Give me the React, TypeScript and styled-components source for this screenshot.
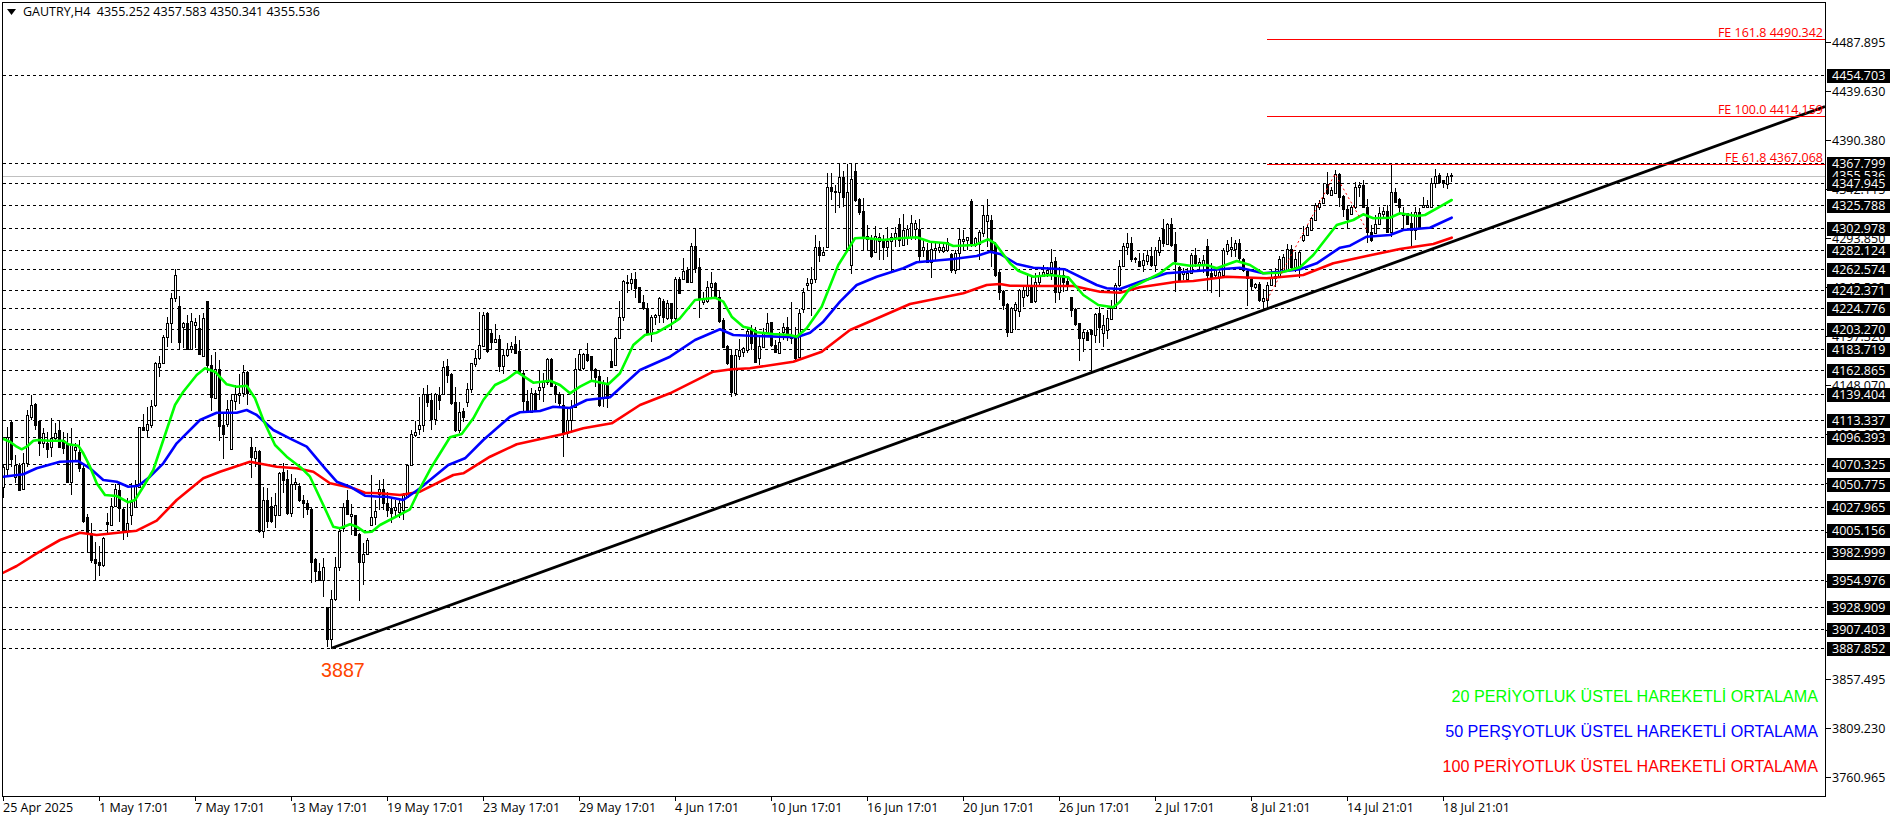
import React from "react";
import styled, { createGlobalStyle } from "styled-components";

type Pt = [number, number];
type Bar = [number, number, number, number, number];

const GlobalStyle = createGlobalStyle`
  html, body { margin: 0; padding: 0; background: #ffffff; }
  body { font-family: "Open Sans", "DejaVu Sans", sans-serif; }
`;

const Page = styled.div`
  width: 1896px;
  height: 820px;
  padding: 2px 0 0 2px;
  box-sizing: border-box;
  background: #fff;
  overflow: hidden;
  font-family: "Open Sans", "DejaVu Sans", sans-serif;
  font-size: 12.5px;
  color: #000;
`;

const ChartRow = styled.div`
  display: flex;
  height: 795px;
`;

const Plot = styled.div`
  position: relative;
  width: 1824px;
  height: 795px;
  box-sizing: border-box;
  border: 1px solid #000;
  flex: none;
`;

const ChartSvg = styled.svg`
  display: block;
  width: 1822px;
  height: 793px;
`;

const PriceAxis = styled.div`
  position: relative;
  flex: 1;
`;

const TimeAxis = styled.div`
  display: flex;
  height: 23px;
  padding-left: 1px;
`;

const TimeCell = styled.div`
  flex: none;
  width: 96px;
  height: 23px;
  box-sizing: border-box;
  padding-top: 3px;
  line-height: 16px;
  white-space: nowrap;
  background: linear-gradient(#000, #000) no-repeat 0 0 / 1px 4px;
`;

const TitleBar = styled.div`
  position: absolute;
  left: 4px;
  top: 0;
  display: flex;
  align-items: center;
  gap: 7px;
  height: 17px;
  white-space: pre;
  line-height: 17px;
`;

const Triangle = styled.svg`
  display: block;
  width: 9px;
  height: 6px;
`;

const FeLabel = styled.div`
  position: absolute;
  right: 2px;
  height: 16px;
  line-height: 16px;
  color: #ff0000;
  white-space: nowrap;
`;

const Legend = styled.div`
  position: absolute;
  right: 7px;
  top: 683px;
  display: flex;
  flex-direction: column;
  align-items: flex-end;
  gap: 15px;
`;

const LegendLabel = styled.div<{ $color: string }>`
  height: 20px;
  line-height: 20px;
  font-family: "Liberation Sans", Arial, sans-serif;
  font-size: 16.15px;
  color: ${(p) => p.$color};
  white-space: nowrap;
`;

const LowLabel = styled.div`
  position: absolute;
  left: 318px;
  top: 654px;
  height: 26px;
  line-height: 26px;
  font-family: "Liberation Sans", Arial, sans-serif;
  font-size: 19.7px;
  color: #ff4500;
`;

const AxisTick = styled.div`
  position: absolute;
  left: 0;
  width: 5px;
  height: 1px;
  background: #000;
`;

const AxisPrice = styled.div`
  position: absolute;
  left: 6px;
  height: 14px;
  line-height: 14px;
  white-space: nowrap;
`;

const LevelBox = styled.div`
  position: absolute;
  left: 1px;
  width: 58px;
  height: 14px;
  padding-left: 5px;
  line-height: 14px;
  background: #000;
  color: #fff;
  white-space: nowrap;
`;

const GridLine = styled.line`
  stroke: #000;
  stroke-width: 1;
  stroke-dasharray: 3 3;
  shape-rendering: crispEdges;
`;

const BidLine = styled.line`
  stroke: #c0c0c0;
  stroke-width: 1;
  shape-rendering: crispEdges;
`;

const FeLine = styled.line`
  stroke: #ff0000;
  stroke-width: 1;
  shape-rendering: crispEdges;
`;

const FeBase = styled.polyline`
  fill: none;
  stroke: #ff0000;
  stroke-width: 1;
  stroke-dasharray: 2 3;
`;

const Wick = styled.line`
  stroke: #000;
  stroke-width: 1;
  shape-rendering: crispEdges;
`;

const Body = styled.rect<{ $bear: boolean }>`
  fill: ${(p) => (p.$bear ? "#000" : "#fff")};
  stroke: #000;
  stroke-width: 1;
  shape-rendering: crispEdges;
`;

const MaLine = styled.polyline<{ $color: string }>`
  fill: none;
  stroke: ${(p) => p.$color};
  stroke-width: 2.6;
  stroke-linejoin: round;
  stroke-linecap: round;
`;

const TrendLine = styled.line`
  stroke: #000;
  stroke-width: 2.8;
`;

const priceY = (p: number) => 75 + (4454.703 - p) * 1.01137;

const LEVELS = [
  "4454.703", "4367.799", "4347.945", "4325.788", "4302.978", "4282.124", "4262.574", "4242.371",
  "4224.776", "4203.270", "4183.719", "4162.865", "4139.404", "4113.337", "4096.393", "4070.325",
  "4050.775", "4027.965", "4005.156", "3982.999", "3954.976", "3928.909", "3907.403", "3887.852",
];

const TICKS: [string, number][] = [
  ["4487.895", 42], ["4439.630", 91], ["4390.380", 140], ["4342.115", 189], ["4293.850", 238],
  ["4245.585", 287], ["4197.320", 336], ["4148.070", 385], ["4099.805", 434], ["4051.540", 483],
  ["4003.275", 532], ["3955.010", 581], ["3906.745", 630], ["3857.495", 679], ["3809.230", 728], ["3760.965", 777],
];

const DATES = [
  "25 Apr 2025", "1 May 17:01", "7 May 17:01", "13 May 17:01", "19 May 17:01", "23 May 17:01",
  "29 May 17:01", "4 Jun 17:01", "10 Jun 17:01", "16 Jun 17:01", "20 Jun 17:01", "26 Jun 17:01",
  "2 Jul 17:01", "8 Jul 21:01", "14 Jul 21:01", "18 Jul 21:01",
];

const FE_LINES: [string, number, number][] = [
  ["FE 161.8 4490.342", 39.5, 32],
  ["FE 100.0 4414.159", 116.5, 109],
  ["FE 61.8 4367.068", 164.5, 157],
];

const LEGEND: [string, string][] = [
  ["20 PERİYOTLUK ÜSTEL HAREKETLİ ORTALAMA", "#00ff00"],
  ["50 PERŞYOTLUK ÜSTEL HAREKETLİ ORTALAMA", "#0000ff"],
  ["100 PERİYOTLUK ÜSTEL HAREKETLİ ORTALAMA", "#ff0000"],
];

const BARS_A: Bar[] = [
  [645,650,712,745,0],[530,560,658,680,0],[510,515,627,650,1],[615,645,680,700,0],[640,645,720,722,1],[610,638,718,720,0],
  [480,495,640,650,0],[435,465,500,510,0],[460,462,525,540,1],[510,512,578,618,1],[535,548,578,595,0],[545,578,598,625,1],
  [505,565,592,622,0],[520,550,565,575,0],[510,540,592,595,1],[545,570,595,612,1],[548,580,695,700,1],[535,585,695,735,0],
  [580,590,600,630,0],[570,605,655,665,1],[640,655,812,818,1],[792,800,845,905,1],[818,848,930,938,1],[875,928,938,990,1],
  [888,936,944,978,1],[862,865,945,950,0],[790,815,823,855,1],[745,768,825,825,0],[702,716,767,770,0],[705,720,775,815,1],
  [775,778,842,870,1],[745,820,842,860,0],[700,755,795,825,0],[690,705,770,775,0],[530,530,710,710,0],[492,530,540,540,1],
  [470,522,540,562,0],[450,468,525,535,0],[335,340,465,470,0],[318,338,352,382,0],[255,262,338,342,0],[200,220,262,290,0],
  [130,145,220,278,0],[58,75,145,155,0],[138,168,275,300,1],[215,220,230,295,0],[195,220,298,298,1],[190,212,296,298,0],
  [205,215,225,295,0],[195,235,312,315,1],[190,205,318,322,0],[153,153,345,368,1],[315,345,442,482,1],[305,358,444,448,0],
  [330,358,527,572,1],[490,525,553,628,1],[450,478,522,530,0],[432,450,598,598,0],[405,432,452,480,0],[372,428,436,462,0],
  [345,366,430,440,0],[362,366,430,465,1],[565,592,622,685,1],[590,603,625,650,0],[600,603,842,850,1],[710,750,842,865,0],
  [715,750,812,835,1],[740,768,812,820,1],[730,765,795,835,0],[665,670,795,795,0],[640,665,690,730,1],[660,688,790,795,1],
  [672,702,788,800,0],[685,695,702,720,0],[700,708,750,755,1],[735,750,760,805,1],[750,760,778,795,1],[775,778,935,998,1],
  [925,928,962,995,1],[940,962,990,990,1],[925,952,990,1040,0],[1072,1072,1168,1190,1],[1020,1048,1168,1196,0],[922,952,1048,1052,0],
  [835,842,952,962,0],[760,770,835,845,0],[720,750,792,795,1],[762,792,797,855,0],[795,796,855,855,1],[850,852,935,1052,1],
  [880,912,935,1005,0],[865,870,912,915,0],[675,802,825,825,0],[750,782,802,825,0],
];

const BARS_B: Bar[] = [
  [810,838,852,900,0],[808,838,880,900,1],[845,880,900,920,1],[860,895,910,940,1],[870,890,900,920,0],[870,880,905,925,0],
  [850,855,900,930,0],[762,765,860,860,0],[660,672,765,768,0],[632,666,675,680,0],[560,645,656,675,0],[535,552,645,665,0],
  [525,552,575,590,1],[550,570,628,660,1],[550,553,628,645,0],[530,555,570,600,1],[452,472,553,555,0],[448,468,494,520,1],
  [490,492,578,585,1],[530,575,660,665,1],[575,605,660,670,0],[595,603,622,635,1],[520,538,575,590,0],[458,460,538,550,0],
  [420,445,462,470,0],[305,406,445,450,0],[305,316,408,410,0],[305,310,422,428,1],[360,368,395,420,1],[343,388,396,400,0],
  [375,388,468,485,1],[420,435,468,492,0],[400,418,436,440,0],[395,408,418,430,0],[378,403,428,430,1],[390,422,485,490,1],
  [480,488,572,605,1],[540,572,606,608,1],[535,548,606,608,0],[540,548,602,605,1],[480,530,540,570,0],[490,515,530,575,0],
  [445,448,515,525,0],[445,447,528,530,1],[515,528,552,580,1],[545,552,580,590,1],[555,585,670,740,1],[595,630,670,685,0],
  [570,590,630,670,0],[445,478,590,592,0],[420,432,478,480,0],[428,432,475,480,0],[400,432,450,455,1],[438,438,480,510,1],
  [475,478,500,530,1],[480,498,585,590,1],[510,520,565,590,0],[500,520,565,595,1],[418,453,470,475,1],[380,385,465,468,0],
  [272,320,385,388,0],[210,213,320,333,0],[195,215,220,250,0],[188,208,220,240,0],[185,208,234,265,1],[230,232,275,277,1],
  [255,275,295,300,1],[280,295,370,375,1],[315,322,372,395,0],[312,316,322,345,0],[262,263,316,340,0],[268,272,320,338,1],
  [270,280,325,330,0],[278,280,325,358,1],[200,208,325,340,0],[200,208,248,250,1],[145,183,208,210,0],[172,180,216,218,1],
  [100,108,215,218,0],[55,108,173,188,1],[145,172,268,325,1],[245,268,275,285,0],[212,232,272,278,0],[185,220,232,265,0],
  [215,220,262,265,1],[240,262,332,340,1],[325,330,410,412,1],[405,408,458,465,1],[420,435,545,560,1],[420,435,550,558,0],
  [388,420,438,450,0],[410,415,425,440,0],[355,362,420,428,0],
];

const BARS_C: Bar[] = [
  [525,540,580,600,1],[530,540,635,637,1],[560,588,625,645,0],[535,545,590,592,0],[488,518,545,550,0],[515,517,585,590,1],
  [570,585,605,610,1],[545,575,608,612,0],[520,530,545,570,0],[500,530,555,572,1],[455,555,565,582,0],[530,560,625,632,1],
  [478,488,622,625,0],[415,427,478,488,0],[385,398,406,422,0],[350,388,398,498,0],[255,292,388,400,0],[272,292,315,335,1],
  [290,306,315,318,0],[70,112,292,295,0],[70,112,122,150,1],[105,122,124,190,1],[40,80,125,175,0],[62,80,140,170,1],
  [42,125,300,305,0],[42,88,345,372,0],[40,62,150,155,1],[145,148,186,195,1],[145,183,262,300,1],[225,258,268,300,0],
  [255,268,318,325,1],[228,258,305,310,0],[250,262,272,330,0],[255,268,290,330,1],[230,272,290,320,0],[250,260,272,362,0],
  [232,248,262,290,0],[205,222,270,290,1],[192,240,285,288,0],[225,238,265,285,0],[195,218,262,270,0],[210,218,238,270,0],
  [208,238,318,335,1],[270,290,300,320,0],[280,300,335,340,1],[280,298,335,383,0],[275,295,300,330,0],[275,292,300,310,0],
  [280,290,302,310,0],[265,275,300,305,0],[310,312,360,370,1],[300,310,360,372,0],[238,268,310,360,0],[240,268,272,300,0],
  [260,262,270,300,0],[148,152,285,290,1],[260,265,285,290,0],[240,245,283,330,0],[168,195,248,260,0],[148,195,212,290,0],
  [195,210,305,350,1],[275,282,375,380,1],[360,365,425,450,1],[420,422,465,480,1],[460,462,545,560,1],[470,475,545,548,0],
  [455,463,480,540,0],[418,420,482,500,0],[408,420,440,470,0],[375,405,435,440,0],[375,405,455,458,1],[368,395,452,458,0],
  [365,378,395,410,0],[345,365,378,380,0],[350,360,370,380,0],[298,335,370,390,0],[320,333,425,458,1],[350,375,425,450,0],
  [360,375,395,425,1],[385,392,405,420,1],[440,442,480,500,1],[475,478,522,528,1],[518,520,565,632,1],[540,545,563,605,0],
  [540,545,570,570,1],[540,540,552,665,1],[490,492,555,580,0],[470,490,530,580,1],[495,525,548,590,0],[480,505,540,568,0],
  [450,475,508,510,0],[400,405,475,478,0],[330,348,405,410,0],
];

const BARS_D: Bar[] = [
  [280,288,348,350,0],[248,278,290,315,0],[262,280,328,335,1],[322,325,327,340,0],[310,333,347,350,1],[308,330,345,365,0],
  [300,316,332,345,0],[290,318,345,350,1],[292,300,345,365,0],[262,270,305,318,0],[208,238,280,290,1],[218,222,282,285,0],
  [205,222,285,290,1],[245,282,332,425,1],[348,350,390,392,1],[355,365,372,390,0],[355,368,388,390,0],[310,315,370,372,0],
  [295,315,340,350,1],[325,335,345,360,0],[315,330,345,370,0],[268,288,375,422,1],[340,370,382,428,1],[350,360,375,385,0],
  [355,365,380,440,0],[295,300,375,380,0],[270,283,302,315,0],[260,290,298,320,0],[270,278,298,320,0],[268,280,325,340,1],
  [325,328,360,365,1],[360,362,385,468,1],[380,388,408,420,1],[400,402,410,418,0],[395,402,450,455,1],[418,445,452,478,0],
  [395,405,450,475,0],[360,385,405,408,0],[355,378,385,410,0],[318,328,380,385,0],[312,320,362,365,0],[282,298,360,365,0],
  [285,298,352,358,1],[305,328,350,365,0],[300,305,355,385,0],[228,255,270,275,0],[225,232,255,258,0],[200,205,240,242,0],
  [160,165,210,212,0],[150,160,170,180,0],[100,145,160,160,0],[65,102,130,135,1],[110,120,135,138,0],[60,72,128,130,0],
  [70,72,140,170,1],[135,138,178,200,1],[165,178,208,238,1],[165,170,192,195,0],[95,112,172,178,0],[95,105,112,140,0],
  [90,105,170,175,1],[148,170,245,278,1],[225,245,270,275,1],[195,222,248,250,0],[170,188,222,225,0],[170,183,192,200,0],
  [165,182,245,250,1],[38,125,245,262,0],[115,125,155,160,1],[145,148,170,195,1],[170,190,195,235,0],[188,190,222,225,1],
  [185,220,240,290,1],[170,185,240,270,0],[175,185,230,235,1],[140,165,172,175,0],[150,165,172,175,0],[85,98,172,175,0],
  [58,78,98,115,0],[70,75,95,100,1],[90,90,100,115,1],[68,78,102,118,0],[70,75,78,95,0],
];

const GREEN_Z: [number, number, Pt[]][] = [
  [0, 250, [[10,567],[30,575],[50,590],[65,598],[80,590],[100,572],[115,570],[150,572],[190,572],[205,583],[235,587],[250,610],[270,650],[290,700],[315,735],[350,738],[385,757],[405,750],[430,710],[460,660],[490,570],[525,465],[550,425],[590,375],[615,355],[645,365],[680,403],[710,410],[740,407],[765,445],[790,510],[825,585],[860,620],[905,655],[930,680],[970,765],[1000,830],[1020,835],[1050,823],[1070,830],[1095,847],[1115,845],[1140,825]]],
  [370, 210, [[120,898],[150,835],[185,770],[240,682],[275,672],[310,625],[340,570],[375,525],[410,508],[440,485],[490,518],[540,512],[570,525],[600,550],[630,530],[665,512],[715,523],[750,490],[790,405],[825,375],[860,368],[900,345],[930,325],[975,270],[1035,263],[1060,275],[1085,320],[1120,350],[1140,355]]],
  [740, 150, [[50,547],[100,552],[150,555],[170,560],[200,535],[245,470],[295,345],[345,265],[370,263],[430,270],[480,265],[530,262],[570,275],[620,280],[640,288],[705,285],[745,268],[765,280],[810,340],[835,362],[880,380],[930,375],[985,382],[1030,435],[1075,465],[1120,472],[1140,455]]],
  [1100, 150, [[90,415],[150,385],[180,370],[220,340],[270,347],[320,345],[350,355],[410,333],[450,345],[490,370],[540,368],[600,352],[640,315],[710,225],[760,210],[790,193],[820,205],[870,203],[900,190],[950,198],[975,195],[1020,170],[1055,150]]],
];

const BLUE_Z: [number, number, Pt[]][] = [
  [0, 250, [[10,680],[70,673],[110,655],[180,635],[235,633],[270,655],[310,690],[350,695],[385,710],[415,707],[450,680],[490,640],[530,580],[600,510],[650,488],[710,488],[740,480],[770,495],[820,540],[875,568],[920,590],[975,655],[1010,695],[1050,710],[1095,737],[1140,740]]],
  [370, 210, [[50,860],[100,870],[150,835],[235,765],[285,745],[340,690],[420,620],[450,607],[510,603],[550,590],[600,594],[650,570],[720,562],[810,480],[900,440],[975,390],[1050,358],[1090,375],[1140,377]]],
  [740, 150, [[170,562],[210,548],[250,515],[300,455],[350,405],[410,380],[490,355],[530,337],[640,327],[710,318],[750,305],[780,312],[830,342],[880,353],[975,358],[1070,405],[1100,415],[1140,417]]],
  [1100, 150, [[60,415],[120,395],[200,370],[300,362],[420,353],[490,370],[540,365],[600,358],[650,340],[720,293],[750,287],[800,260],[870,255],[910,240],[990,233],[1055,203]]],
];

const RED_Z: [number, number, Pt[]][] = [
  [0, 250, [[10,968],[50,948],[110,910],[180,870],[240,848],[290,855],[410,842],[470,812],[530,750],[610,685],[660,665],[750,635],[830,650],[890,655],[940,665],[990,700],[1060,715],[1095,728],[1140,730]]],
  [370, 210, [[90,855],[150,845],[250,795],[280,790],[360,740],[440,703],[580,672],[640,655],[725,640],[810,585],[900,550],[1030,485],[1085,478],[1140,475]]],
  [740, 150, [[160,635],[245,605],[330,540],[400,510],[510,462],[670,430],[740,405],[780,402],[810,407],[890,408],[1000,408],[1080,425],[1140,428]]],
  [1100, 150, [[50,428],[120,412],[230,395],[280,393],[380,380],[500,385],[610,375],[700,340],[800,318],[900,297],[1000,282],[1055,263]]],
];

const toPoints = (segments: [number, number, Pt[]][]) => {
  const out: Pt[] = [];
  segments.forEach(([x0, y0, pts]) => {
    pts.forEach(([X, Y]) => {
      const x = x0 + X / 3;
      if (!out.length || x > out[out.length - 1][0]) out.push([x, y0 + Y / 3]);
    });
  });
  return out.map(([x, y]) => `${x.toFixed(1)},${y.toFixed(1)}`).join(" ");
};

type Candle = { x: number; hi: number; top: number; bot: number; lo: number; bear: boolean };

const toCandles = (bars: Bar[], start: number, y0: number): Candle[] =>
  bars.map(([hi, top, bot, lo, t], k) => ({
    x: 3 + 4 * (start + k),
    hi: Math.round(y0 + hi / 3),
    top: Math.round(y0 + top / 3),
    bot: Math.round(y0 + bot / 3),
    lo: Math.round(y0 + lo / 3),
    bear: t === 1,
  }));

const CANDLES: Candle[] = [
  ...toCandles(BARS_A, 0, 250),
  ...toCandles(BARS_B, 94, 210),
  ...toCandles(BARS_C, 187, 150),
  ...toCandles(BARS_D, 280, 150),
];

export default function App() {
  return (
    <Page>
      <GlobalStyle />
      <ChartRow>
        <Plot>
          <ChartSvg viewBox="3 3 1822 793">
            {LEVELS.map((l) => {
              const y = Math.round(priceY(parseFloat(l))) + 0.5;
              return <GridLine key={l} x1={3} x2={1825} y1={y} y2={y} />;
            })}
            <BidLine x1={3} x2={1825} y1={176.5} y2={176.5} />
            {CANDLES.map((c) => (
              <g key={c.x}>
                <Wick x1={c.x + 0.5} x2={c.x + 0.5} y1={c.hi} y2={c.lo} />
                <Body $bear={c.bear} x={c.x - 0.5} y={c.top + 0.5} width={2} height={Math.max(c.bot - c.top, 1)} />
              </g>
            ))}
            <MaLine $color="#ff0000" points={toPoints(RED_Z)} />
            <MaLine $color="#0000ff" points={toPoints(BLUE_Z)} />
            <MaLine $color="#00ff00" points={toPoints(GREEN_Z)} />
            <TrendLine x1={332} y1={648} x2={1825} y2={106.5} />
            <FeBase points="1267,300 1335,174 1368,232" />
            {FE_LINES.map(([t, y]) => (
              <FeLine key={t} x1={1267} x2={1825} y1={y} y2={y} />
            ))}
          </ChartSvg>
          <TitleBar>
            <Triangle viewBox="0 0 9 6">
              <path d="M0 0H9L4.5 6Z" fill="#000" />
            </Triangle>
            {"GAUTRY,H4  4355.252 4357.583 4350.341 4355.536"}
          </TitleBar>
          {FE_LINES.map(([t, , cy]) => (
            <FeLabel key={t} style={{ top: cy - 10 }}>
              {t}
            </FeLabel>
          ))}
          <LowLabel>3887</LowLabel>
          <Legend>
            {LEGEND.map(([t, c]) => (
              <LegendLabel key={t} $color={c}>
                {t}
              </LegendLabel>
            ))}
          </Legend>
        </Plot>
        <PriceAxis>
          {TICKS.map(([t, y]) => (
            <React.Fragment key={t}>
              <AxisTick style={{ top: y - 2 }} />
              <AxisPrice style={{ top: y - 8 }}>{t}</AxisPrice>
            </React.Fragment>
          ))}
          <LevelBox style={{ top: 175 - 8 }}>4355.536</LevelBox>
          {LEVELS.map((l) => (
            <LevelBox key={l} style={{ top: Math.round(priceY(parseFloat(l))) - 8 }}>
              {l}
            </LevelBox>
          ))}
        </PriceAxis>
      </ChartRow>
      <TimeAxis>
        {DATES.map((d) => (
          <TimeCell key={d}>{d}</TimeCell>
        ))}
      </TimeAxis>
    </Page>
  );
}
